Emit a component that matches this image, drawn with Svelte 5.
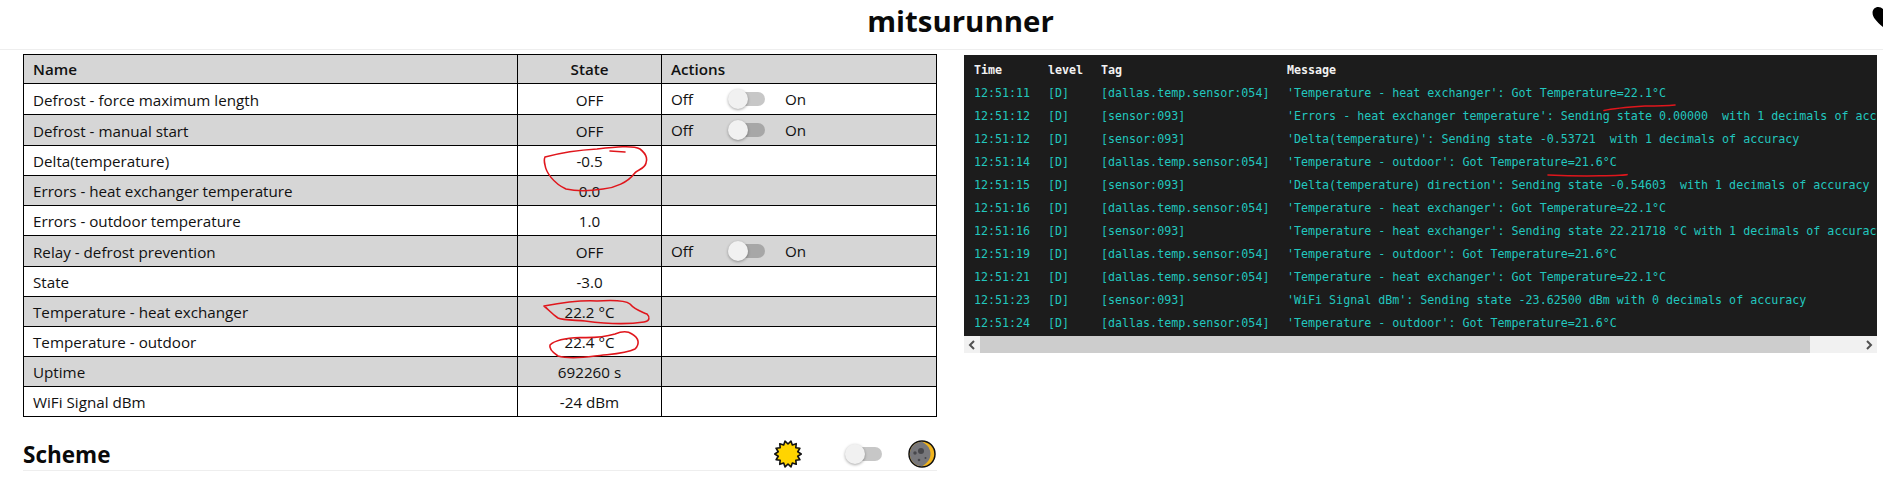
<script>
  const rows = [
    { name: 'Defrost - force maximum length', state: 'OFF', toggle: true },
    { name: 'Defrost - manual start', state: 'OFF', toggle: true },
    { name: 'Delta(temperature)', state: '-0.5' },
    { name: 'Errors - heat exchanger temperature', state: '0.0' },
    { name: 'Errors - outdoor temperature', state: '1.0' },
    { name: 'Relay - defrost prevention', state: 'OFF', toggle: true },
    { name: 'State', state: '-3.0' },
    { name: 'Temperature - heat exchanger', state: '22.2 °C' },
    { name: 'Temperature - outdoor', state: '22.4 °C' },
    { name: 'Uptime', state: '692260 s' },
    { name: 'WiFi Signal dBm', state: '-24 dBm' }
  ];

  const dallas = '[dallas.temp.sensor:054]';
  const sensor = '[sensor:093]';
  const heat = "'Temperature - heat exchanger': Got Temperature=22.1°C";
  const outdoor = "'Temperature - outdoor': Got Temperature=21.6°C";

  const logs = [
    ['12:51:11', dallas, heat],
    ['12:51:12', sensor, "'Errors - heat exchanger temperature': Sending state 0.00000  with 1 decimals of accuracy"],
    ['12:51:12', sensor, "'Delta(temperature)': Sending state -0.53721  with 1 decimals of accuracy"],
    ['12:51:14', dallas, outdoor],
    ['12:51:15', sensor, "'Delta(temperature) direction': Sending state -0.54603  with 1 decimals of accuracy"],
    ['12:51:16', dallas, heat],
    ['12:51:16', sensor, "'Temperature - heat exchanger': Sending state 22.21718 °C with 1 decimals of accuracy"],
    ['12:51:19', dallas, outdoor],
    ['12:51:21', dallas, heat],
    ['12:51:23', sensor, "'WiFi Signal dBm': Sending state -23.62500 dBm with 0 decimals of accuracy"],
    ['12:51:24', dallas, outdoor]
  ];

  // spiky sun outline
  const sunPoints = Array.from({ length: 28 }, (_, i) => {
    const a = (i / 28) * Math.PI * 2;
    const r = i % 2 ? 10 : 13.2;
    return `${(14 + r * Math.cos(a)).toFixed(2)},${(14 + r * Math.sin(a)).toFixed(2)}`;
  }).join(' ');
</script>

<div class="page">
  <header>
    <h1>mitsurunner</h1>
    <svg class="heart" viewBox="0 0 24 22" aria-hidden="true">
      <path d="M12 22 C4 15 0 11 0 6 C0 2.500 2.600 0 6 0 C8.400 0 10.800 1.300 12 3.500 C13.200 1.300 15.600 0 18 0 C21.400 0 24 2.500 24 6 C24 11 20 15 12 22 Z" />
    </svg>
  </header>

  <main>
    <section class="left">
      <table>
        <thead>
          <tr>
            <th class="name">Name</th>
            <th class="state">State</th>
            <th>Actions</th>
          </tr>
        </thead>
        <tbody>
          {#each rows as row}
            <tr class:tall={row.toggle}>
              <td>{row.name}</td>
              <td class="state">{row.state}</td>
              <td>
                {#if row.toggle}
                  <div class="action">
                    <span class="off">Off</span>
                    <span class="switch"><span class="knob"></span></span>
                    <span>On</span>
                  </div>
                {/if}
              </td>
            </tr>
          {/each}
        </tbody>
      </table>

      <div class="scheme">
        <h2>Scheme</h2>
        <div class="scheme-toggle">
          <svg class="icon" viewBox="0 0 28 28" aria-hidden="true">
            <polygon points={sunPoints} fill="#ffd400" stroke="#111" stroke-width="1.600" stroke-linejoin="round" />
          </svg>
          <span class="switch"><span class="knob"></span></span>
          <svg class="icon" viewBox="0 0 28 28" aria-hidden="true">
            <circle cx="14" cy="14" r="13" fill="#f2b51d" stroke="#111" stroke-width="1.500" />
            <path d="M14 1.800 A12.200 12.200 0 0 0 14 26.200 C20 23 22.500 18.500 22.500 14 C22.500 9.500 20 5 14 1.800 Z" fill="#77777b" />
            <circle cx="13" cy="11" r="3" fill="#47474b" />
            <circle cx="7" cy="13" r="1.700" fill="#47474b" />
            <circle cx="11" cy="20" r="1.300" fill="#47474b" />
            <circle cx="17.500" cy="18" r="1" fill="#47474b" />
          </svg>
        </div>
      </div>
    </section>

    <section class="right">
      <div class="log">
        <table>
          <thead>
            <tr><th class="c-time">Time</th><th class="c-level">level</th><th class="c-tag">Tag</th><th>Message</th></tr>
          </thead>
          <tbody>
            {#each logs as [time, tag, message]}
              <tr><td>{time}</td><td>[D]</td><td>{tag}</td><td>{message}</td></tr>
            {/each}
          </tbody>
        </table>
      </div>
      <div class="scrollbar">
        <span class="arrow">
          <svg viewBox="0 0 8 10" aria-hidden="true"><path d="M6 1 L2 5 L6 9" /></svg>
        </span>
        <span class="thumb"></span>
        <span class="arrow end">
          <svg viewBox="0 0 8 10" aria-hidden="true"><path d="M2 1 L6 5 L2 9" /></svg>
        </span>
      </div>
    </section>
  </main>

  <!-- red pen marks drawn over the screenshot -->
  <svg class="marks" viewBox="0 0 1883 482" aria-hidden="true">
    <path d="M545 157 C560 153 580 150 597 149 C615 147 633 145 640 149 C648 155 647 161 646 163 C645 169 636 170 634 174 C628 182 615 188 603 189 C590 191 575 191 566 189 C553 183 546 172 545 165 C544 161 544 159 545 157 M610 151 L625 152" />
    <path d="M544 306 C560 303 580 300 597 301 C612 300 625 300 630 304 C635 310 640 311 647 314 C650 317 650 321 644 322 C625 325 600 323 585 321 C572 320 562 320 558 318 C552 314 548 309 544 306 Z" />
    <path d="M550 345 C555 340 565 338 580 337.500 C595 338 605 337 615 334 C622 331 628 331 632 334 C639 338 640 344 635 349 C625 354 610 354 595 356 C580 358 565 358 558 356 C552 352 549 348 550 345 Z" />
    <path d="M1604 110.500 C1615 108 1630 107 1645 106 C1660 106 1670 105.500 1675 105" />
    <path d="M1548 175 C1570 176 1590 176 1600 175.800 C1615 175.500 1628 175 1627 174.500" />
  </svg>
</div>

<style>
  :global(body) {
    margin: 0;
    background: #fff;
    color: #111;
    font-family: "Open Sans", "Noto Sans", sans-serif;
  }

  .page {
    position: relative;
    height: 482px;
    overflow: hidden;
  }

  header {
    position: relative;
    height: 49px;
    border-bottom: 1px solid #eee;
    display: flex;
    justify-content: center;
    align-items: center;
  }

  h1 {
    margin: 0 0 8px 38px;
    font-size: 29.400px;
    font-weight: 700;
    color: #0a0a0a;
  }

  .heart {
    position: absolute;
    left: 1872px;
    top: 7px;
    width: 24px;
    height: 21px;
    fill: #000;
  }

  main {
    display: flex;
    padding: 4px 6px 0 23px;
    gap: 27.500px;
  }

  .left {
    width: 913.500px;
    flex: none;
  }

  .left table {
    width: 100%;
    border-collapse: collapse;
    table-layout: fixed;
    font-size: 15.200px;
  }

  .left th,
  .left td {
    border: 1px solid #000;
    padding: 0 9px;
    height: 29px;
    text-align: left;
    box-sizing: content-box;
  }

  .left th {
    height: 28px;
    background: #d6d6d6;
    font-weight: 600;
  }

  .left .name {
    width: 475px;
  }

  .left th.state {
    width: 125px;
  }

  .left .state {
    text-align: center;
  }

  .left tr.tall td {
    height: 28px;
    padding-top: 2px;
  }

  .left tbody tr:nth-child(even) td {
    background: #d6d6d6;
  }

  .action {
    display: flex;
    align-items: center;
    margin-top: -2px;
  }

  .off {
    width: 60px;
  }

  .action .switch {
    margin-right: 20px;
  }

  .switch {
    position: relative;
    display: block;
    width: 34px;
    height: 14px;
    border-radius: 7px;
    background: rgba(0, 0, 0, 0.22);
    flex: none;
  }

  .knob {
    position: absolute;
    left: -3px;
    top: -3px;
    width: 20px;
    height: 20px;
    border-radius: 50%;
    background: #f1f1f1;
    box-shadow: 0 1px 3px rgba(0, 0, 0, 0.35);
  }

  .scheme {
    display: flex;
    justify-content: space-between;
    align-items: center;
    margin-top: 21px;
    height: 32px;
    border-bottom: 1px solid #eee;
  }

  h2 {
    margin: 0;
    font-size: 22.500px;
    font-weight: 700;
    color: #0a0a0a;
  }

  .scheme-toggle {
    display: flex;
    align-items: center;
    margin-right: 1px;
  }

  .scheme-toggle .switch {
    margin: 0 26px 0 46px;
  }

  .icon {
    width: 28px;
    height: 28px;
    display: block;
  }

  .right {
    width: 913px;
    flex: none;
    margin-top: 1px;
  }

  .log {
    height: 281px;
    box-sizing: border-box;
    padding: 3.500px 0 0 10px;
    background: #1c1c1c;
    overflow: hidden;
  }

  .log table {
    width: 1400px;
    table-layout: fixed;
    border-collapse: collapse;
    font-family: "DejaVu Sans Mono", "Liberation Mono", monospace;
    font-size: 11.670px;
  }

  .log th,
  .log td {
    height: 23px;
    padding: 0;
    text-align: left;
    white-space: pre;
    color: #22c7bf;
  }

  .log th {
    color: #f2f2f2;
    font-weight: 700;
  }

  .c-time {
    width: 74px;
  }

  .c-level {
    width: 53px;
  }

  .c-tag {
    width: 186px;
  }

  .scrollbar {
    display: flex;
    height: 17px;
    background: #f1f1f1;
  }

  .arrow {
    width: 16px;
    display: flex;
    align-items: center;
    justify-content: center;
    flex: none;
  }

  .arrow svg {
    width: 8px;
    height: 10px;
    fill: none;
    stroke: #505050;
    stroke-width: 2;
  }

  .arrow.end {
    margin-left: auto;
  }

  .thumb {
    width: 830px;
    background: #cdcdcd;
  }

  .marks {
    position: absolute;
    left: 0;
    top: 0;
    width: 1883px;
    height: 482px;
    fill: none;
    stroke: #e0161c;
    stroke-width: 1.600;
    stroke-linecap: round;
    stroke-linejoin: round;
    pointer-events: none;
  }
</style>
